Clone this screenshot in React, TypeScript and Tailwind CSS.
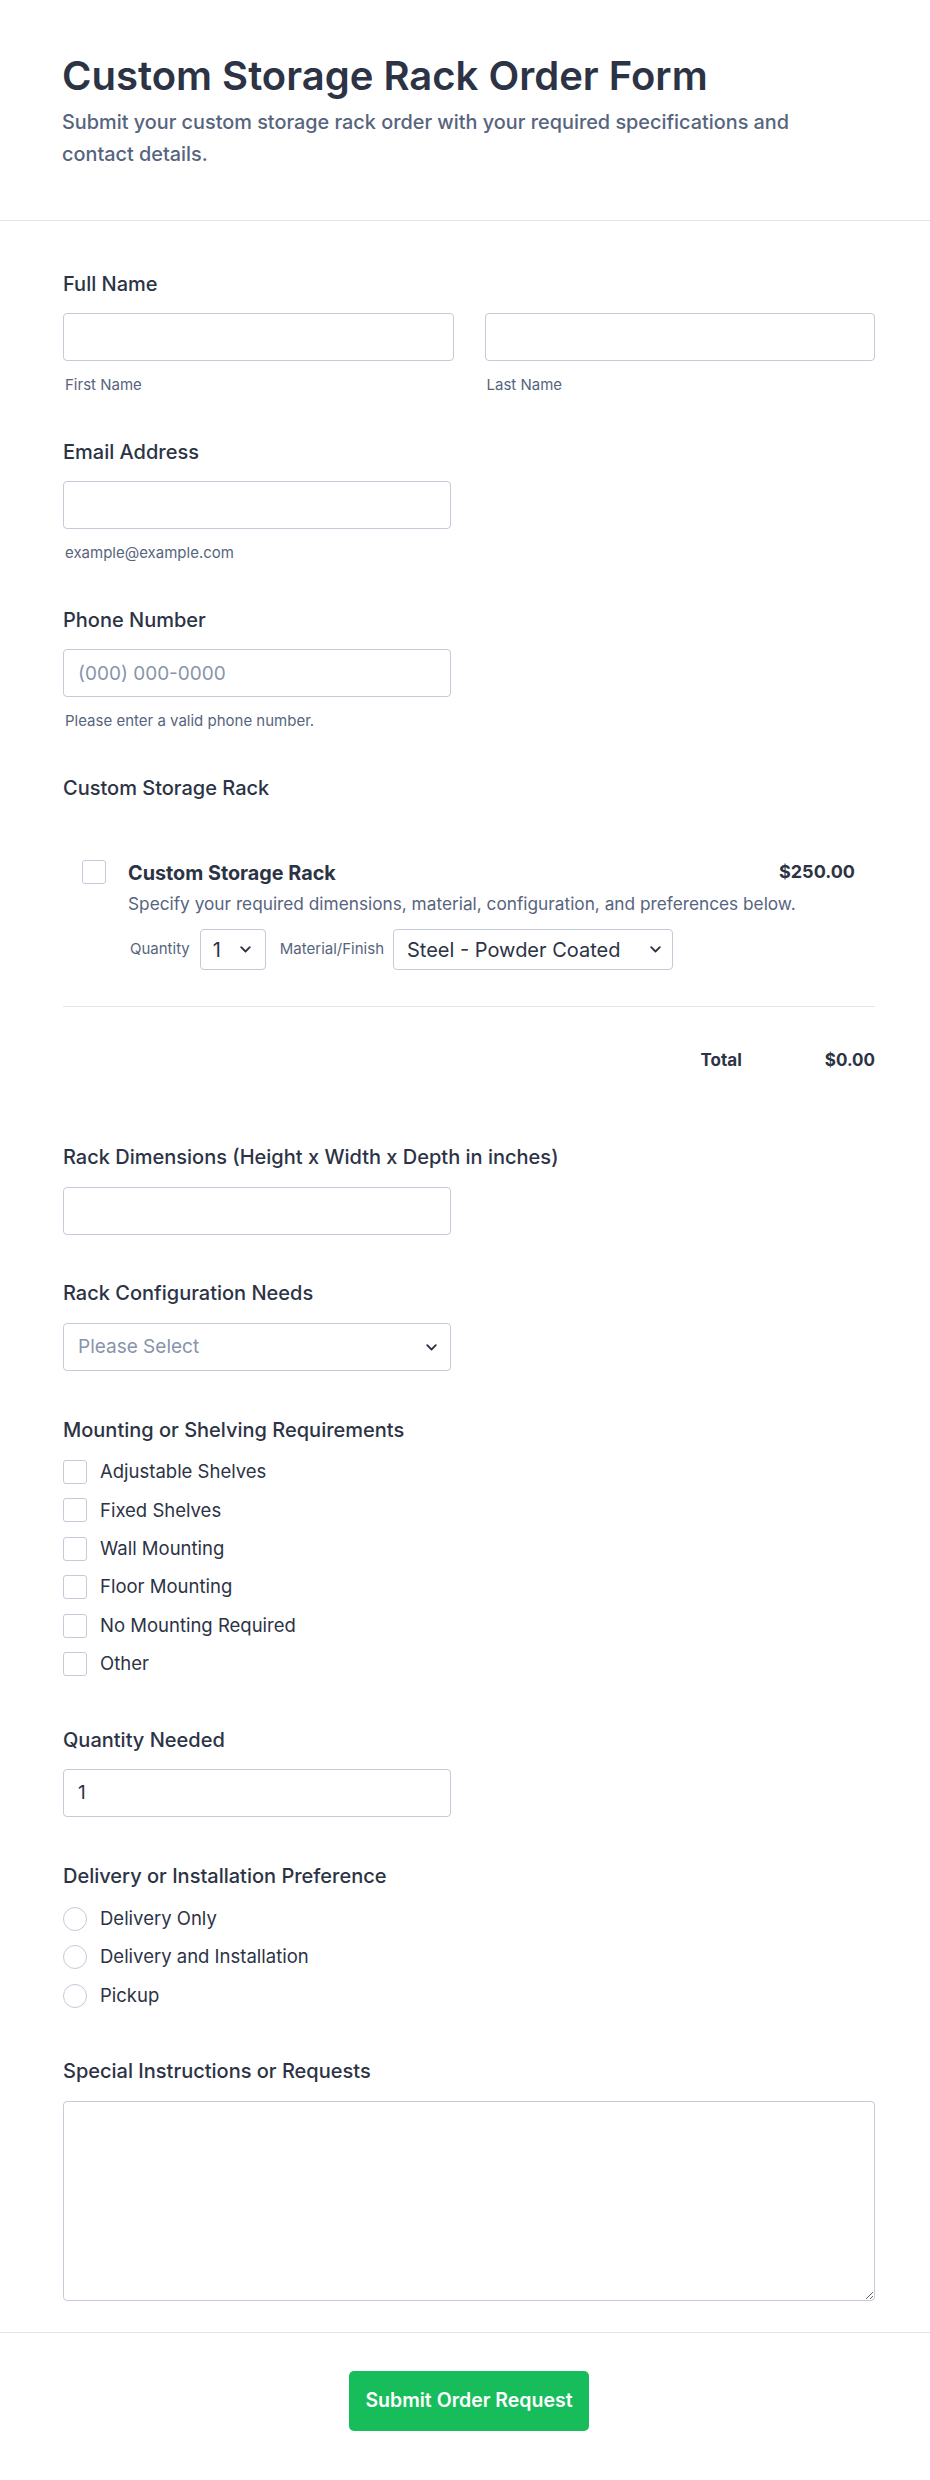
import React from "react";

const Chevron = ({ className }: { className?: string }) => (
  <svg
    className={className}
    width="11"
    height="7"
    viewBox="0 0 11 7"
    fill="none"
    aria-hidden="true"
  >
    <path d="M1.2 1.2L5.5 5.5L9.8 1.2" stroke="#2c3345" strokeWidth="1.8" strokeLinecap="round" strokeLinejoin="round" />
  </svg>
);

const Label = ({ children }: { children: React.ReactNode }) => (
  <div className="text-[20px] leading-[24px] font-medium text-[#2c3345]">{children}</div>
);

const TextInput = ({ placeholder, value, className }: { placeholder?: string; value?: string; className?: string }) => (
  <input
    type="text"
    placeholder={placeholder}
    defaultValue={value}
    className={`h-[48px] rounded-[4px] border border-[#c3cad8] bg-white px-[14px] text-[19px] text-[#2c3345] placeholder:text-[#8894ab] outline-none ${className ?? ""}`}
  />
);

const Box = () => (
  <span className="block h-[24px] w-[24px] shrink-0 rounded-[3px] border border-[#c3cad8] bg-white" />
);

const Circle = () => (
  <span className="block h-[24px] w-[24px] shrink-0 rounded-full border border-[#c3cad8] bg-white" />
);

export default function App() {
  const mounting = [
    "Adjustable Shelves",
    "Fixed Shelves",
    "Wall Mounting",
    "Floor Mounting",
    "No Mounting Required",
    "Other",
  ];
  const delivery = ["Delivery Only", "Delivery and Installation", "Pickup"];

  return (
    <div className="min-h-[2480px] w-full bg-white font-[Inter,sans-serif] text-[#2c3345]">
      <header className="border-b border-[#e3e5ee] pl-[62px] pr-[55px] pt-[52px] pb-[50px]">
        <h1 className="text-[40px] leading-[48px] font-semibold text-[#2c3345]">
          Custom Storage Rack Order Form
        </h1>
        <p className="mt-[6px] max-w-[790px] text-[19.85px] leading-[32px] font-medium text-[#57647e]">
          Submit your custom storage rack order with your required specifications and contact details.
        </p>
      </header>

      <main className="flex flex-col pl-[63px] pr-[55px] pt-[51px] pb-[31px]">
        {/* Full Name */}
        <Label>Full Name</Label>
        <div className="mt-[17px] grid grid-cols-2 gap-x-[31px]">
          <div className="flex flex-col">
            <TextInput className="w-full" />
            <span className="mt-[14px] pl-[2px] text-[15px] leading-[20px] text-[#57647e]">First Name</span>
          </div>
          <div className="flex flex-col">
            <TextInput className="w-full" />
            <span className="mt-[14px] pl-[2px] text-[15px] leading-[20px] text-[#57647e]">Last Name</span>
          </div>
        </div>

        {/* Email */}
        <div className="mt-[45px]">
          <Label>Email Address</Label>
        </div>
        <TextInput className="mt-[17px] w-[388px]" />
        <span className="mt-[14px] pl-[2px] text-[15px] leading-[20px] text-[#57647e]">example@example.com</span>

        {/* Phone */}
        <div className="mt-[45px]">
          <Label>Phone Number</Label>
        </div>
        <TextInput className="mt-[17px] w-[388px]" placeholder="(000) 000-0000" />
        <span className="mt-[14px] pl-[2px] text-[15px] leading-[20px] text-[#57647e]">Please enter a valid phone number.</span>

        {/* Product */}
        <div className="mt-[45px]">
          <Label>Custom Storage Rack</Label>
        </div>
        <div className="mt-[60px] flex items-start gap-[22px] pl-[19px] pr-[20px]">
          <Box />
          <div className="flex flex-1 flex-col">
            <div className="flex items-start justify-between">
              <span className="text-[19.8px] leading-[26px] font-bold text-[#2c3345]">Custom Storage Rack</span>
              <span className="text-[18px] leading-[24px] font-bold text-[#2c3345]">$250.00</span>
            </div>
            <p className="mt-[5px] text-[17.25px] leading-[26px] text-[#57647e]">
              Specify your required dimensions, material, configuration, and preferences below.
            </p>
            <div className="mt-[12px] flex items-center pl-[2px]">
              <span className="text-[15px] text-[#57647e]">Quantity</span>
              <div className="relative ml-[10px] h-[41px] w-[66px]">
                <select
                  defaultValue="1"
                  className="h-full w-full appearance-none rounded-[4px] border border-[#c3cad8] bg-white pl-[12px] text-[20px] text-[#2c3345] outline-none"
                >
                  <option value="1">1</option>
                  <option value="2">2</option>
                </select>
                <Chevron className="pointer-events-none absolute right-[15px] top-[17px]" />
              </div>
              <span className="ml-[14px] text-[15px] text-[#57647e]">Material/Finish</span>
              <div className="relative ml-[9px] h-[41px] w-[280px]">
                <select
                  defaultValue="steel"
                  className="h-full w-full appearance-none rounded-[4px] border border-[#c3cad8] bg-white pl-[13px] text-[20px] text-[#2c3345] outline-none"
                >
                  <option value="steel">Steel - Powder Coated</option>
                </select>
                <Chevron className="pointer-events-none absolute right-[12px] top-[17px]" />
              </div>
            </div>
          </div>
        </div>
        <div className="mt-[36px] h-px w-full bg-[#e3e5ee]" />
        <div className="mt-[42px] flex h-[24px] items-center justify-end gap-[83px] text-[17px] font-bold text-[#2c3345]">
          <span>Total</span>
          <span>$0.00</span>
        </div>

        {/* Rack Dimensions */}
        <div className="mt-[72px]">
          <Label>Rack Dimensions (Height x Width x Depth in inches)</Label>
        </div>
        <TextInput className="mt-[18px] w-[388px]" />

        {/* Configuration */}
        <div className="mt-[46px]">
          <Label>Rack Configuration Needs</Label>
        </div>
        <div className="relative mt-[18px] h-[48px] w-[388px]">
          <select
            defaultValue=""
            className="h-full w-full appearance-none rounded-[4px] border border-[#c3cad8] bg-white px-[14px] text-[19px] text-[#8894ab] outline-none"
          >
            <option value="">Please Select</option>
          </select>
          <Chevron className="pointer-events-none absolute right-[14px] top-[21px]" />
        </div>

        {/* Mounting */}
        <div className="mt-[47px]">
          <Label>Mounting or Shelving Requirements</Label>
        </div>
        <div className="mt-[18px] flex flex-col gap-[14.4px]">
          {mounting.map((m) => (
            <div key={m} className="flex h-[24px] items-center gap-[13px]">
              <Box />
              <span className="text-[18.5px] text-[#2c3345]">{m}</span>
            </div>
          ))}
        </div>

        {/* Quantity Needed */}
        <div className="mt-[52px]">
          <Label>Quantity Needed</Label>
        </div>
        <TextInput className="mt-[17px] w-[388px]" value="1" />

        {/* Delivery */}
        <div className="mt-[47px]">
          <Label>Delivery or Installation Preference</Label>
        </div>
        <div className="mt-[19px] flex flex-col gap-[14.4px]">
          {delivery.map((d) => (
            <div key={d} className="flex h-[24px] items-center gap-[13px]">
              <Circle />
              <span className="text-[18.5px] text-[#2c3345]">{d}</span>
            </div>
          ))}
        </div>

        {/* Special Instructions */}
        <div className="mt-[51px]">
          <Label>Special Instructions or Requests</Label>
        </div>
        <textarea className="mt-[18px] h-[200px] w-full rounded-[4px] border border-[#c3cad8] bg-white p-[14px] text-[19px] outline-none" />
      </main>

      <footer className="flex justify-center border-t border-[#e3e5ee] pl-[63px] pr-[55px] pt-[38px] pb-[48px]">
        <button
          type="button"
          className="h-[60px] w-[240px] rounded-[5px] bg-[#18bd5b] text-[19.5px] font-semibold text-white"
        >
          Submit Order Request
        </button>
      </footer>
    </div>
  );
}
